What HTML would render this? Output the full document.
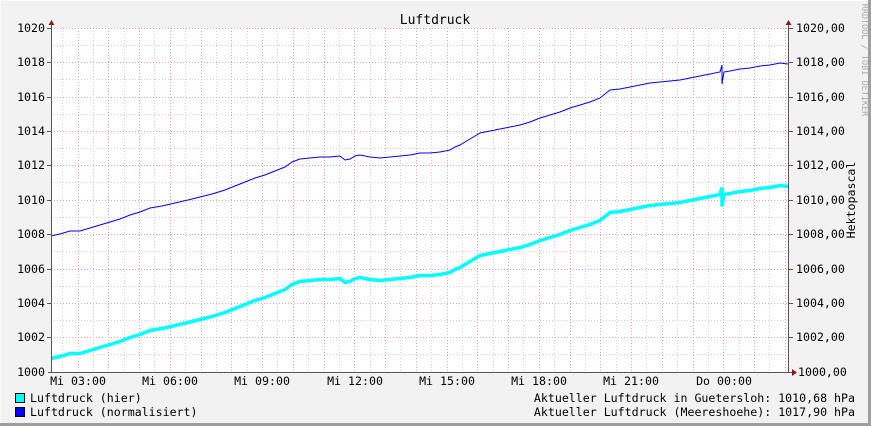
<!DOCTYPE html>
<html><head><meta charset="utf-8"><style>
html,body{margin:0;padding:0;background:#f2f2f2}
svg{display:block}
text{font-family:"DejaVu Sans Mono","Liberation Mono",monospace;font-size:11.6px;fill:#000}
</style></head><body>
<svg width="871" height="426" viewBox="0 0 871 426" xmlns="http://www.w3.org/2000/svg">
<rect x="0" y="0" width="871" height="426" fill="#f2f2f2"/>
<line x1="0" y1="0.5" x2="871" y2="0.5" stroke="#fcfcfc"/>
<line x1="0.5" y1="0" x2="0.5" y2="426" stroke="#fcfcfc"/>
<line x1="0" y1="424.5" x2="871" y2="424.5" stroke="#9e9e9e" stroke-width="3"/>
<line x1="869.5" y1="0" x2="869.5" y2="426" stroke="#9e9e9e" stroke-width="3"/>
<rect x="51" y="28" width="738" height="344" fill="#fff"/>
<g id="grid" stroke-width="1" stroke-dasharray="1,2">
<g stroke="#d0d0d0">
<line x1="62.5" y1="28" x2="62.5" y2="372"/><line x1="93.5" y1="28" x2="93.5" y2="372"/><line x1="124.5" y1="28" x2="124.5" y2="372"/><line x1="154.5" y1="28" x2="154.5" y2="372"/><line x1="185.5" y1="28" x2="185.5" y2="372"/><line x1="216.5" y1="28" x2="216.5" y2="372"/><line x1="247.5" y1="28" x2="247.5" y2="372"/><line x1="277.5" y1="28" x2="277.5" y2="372"/><line x1="308.5" y1="28" x2="308.5" y2="372"/><line x1="339.5" y1="28" x2="339.5" y2="372"/><line x1="370.5" y1="28" x2="370.5" y2="372"/><line x1="400.5" y1="28" x2="400.5" y2="372"/><line x1="431.5" y1="28" x2="431.5" y2="372"/><line x1="462.5" y1="28" x2="462.5" y2="372"/><line x1="493.5" y1="28" x2="493.5" y2="372"/><line x1="523.5" y1="28" x2="523.5" y2="372"/><line x1="554.5" y1="28" x2="554.5" y2="372"/><line x1="585.5" y1="28" x2="585.5" y2="372"/><line x1="616.5" y1="28" x2="616.5" y2="372"/><line x1="646.5" y1="28" x2="646.5" y2="372"/><line x1="677.5" y1="28" x2="677.5" y2="372"/><line x1="708.5" y1="28" x2="708.5" y2="372"/><line x1="739.5" y1="28" x2="739.5" y2="372"/><line x1="769.5" y1="28" x2="769.5" y2="372"/>
<line x1="51" y1="45.5" x2="789" y2="45.5"/><line x1="51" y1="79.5" x2="789" y2="79.5"/><line x1="51" y1="114.5" x2="789" y2="114.5"/><line x1="51" y1="148.5" x2="789" y2="148.5"/><line x1="51" y1="182.5" x2="789" y2="182.5"/><line x1="51" y1="217.5" x2="789" y2="217.5"/><line x1="51" y1="251.5" x2="789" y2="251.5"/><line x1="51" y1="286.5" x2="789" y2="286.5"/><line x1="51" y1="320.5" x2="789" y2="320.5"/><line x1="51" y1="354.5" x2="789" y2="354.5"/>
</g>
<g stroke="#f0a0a0">
<line x1="78.5" y1="28" x2="78.5" y2="372"/><line x1="108.5" y1="28" x2="108.5" y2="372"/><line x1="139.5" y1="28" x2="139.5" y2="372"/><line x1="170.5" y1="28" x2="170.5" y2="372"/><line x1="201.5" y1="28" x2="201.5" y2="372"/><line x1="231.5" y1="28" x2="231.5" y2="372"/><line x1="262.5" y1="28" x2="262.5" y2="372"/><line x1="293.5" y1="28" x2="293.5" y2="372"/><line x1="324.5" y1="28" x2="324.5" y2="372"/><line x1="354.5" y1="28" x2="354.5" y2="372"/><line x1="385.5" y1="28" x2="385.5" y2="372"/><line x1="416.5" y1="28" x2="416.5" y2="372"/><line x1="447.5" y1="28" x2="447.5" y2="372"/><line x1="477.5" y1="28" x2="477.5" y2="372"/><line x1="508.5" y1="28" x2="508.5" y2="372"/><line x1="539.5" y1="28" x2="539.5" y2="372"/><line x1="570.5" y1="28" x2="570.5" y2="372"/><line x1="600.5" y1="28" x2="600.5" y2="372"/><line x1="631.5" y1="28" x2="631.5" y2="372"/><line x1="662.5" y1="28" x2="662.5" y2="372"/><line x1="693.5" y1="28" x2="693.5" y2="372"/><line x1="723.5" y1="28" x2="723.5" y2="372"/><line x1="754.5" y1="28" x2="754.5" y2="372"/><line x1="785.5" y1="28" x2="785.5" y2="372"/>
<line x1="51" y1="28.5" x2="789" y2="28.5"/><line x1="51" y1="62.5" x2="789" y2="62.5"/><line x1="51" y1="97.5" x2="789" y2="97.5"/><line x1="51" y1="131.5" x2="789" y2="131.5"/><line x1="51" y1="165.5" x2="789" y2="165.5"/><line x1="51" y1="200.5" x2="789" y2="200.5"/><line x1="51" y1="234.5" x2="789" y2="234.5"/><line x1="51" y1="269.5" x2="789" y2="269.5"/><line x1="51" y1="303.5" x2="789" y2="303.5"/><line x1="51" y1="337.5" x2="789" y2="337.5"/>
</g>
</g>
<g id="data" fill="none" stroke-linejoin="miter">
<polyline stroke="#0000ff" stroke-width="1" points="51,236 60,234 70,231 80,231 90,228 100,225 110,222 120,219 130,215 140,212 150,208 162,206 175,203 188,200 200,197 212,194 225,190 235,186 245,182 255,178 265,175 275,171 285,167 292,162 300,159 310,158 320,157 330,157 340,156 345,160 350,159 355,156 360,155 370,157 380,158 390,157 400,156 410,155 420,153 430,153 440,152 450,150 455,147 460,145 470,139 480,133 490,131 500,129 510,127 520,125 530,122 540,118 550,115 560,112 570,108 580,105 590,102 600,98 605,94 610,90 620,89 630,87 640,85 650,83 660,82 670,81 680,80 690,78 700,76 710,74 720,72 722,65 722,84 724,72 730,71 740,69 750,68 760,66 770,65 780,63 788,64"/>
<polyline stroke="#00ffff" stroke-width="3.5" transform="translate(0,122.5)" points="51,236 60,234 70,231 80,231 90,228 100,225 110,222 120,219 130,215 140,212 150,208 162,206 175,203 188,200 200,197 212,194 225,190 235,186 245,182 255,178 265,175 275,171 285,167 292,162 300,159 310,158 320,157 330,157 340,156 345,160 350,159 355,156 360,155 370,157 380,158 390,157 400,156 410,155 420,153 430,153 440,152 450,150 455,147 460,145 470,139 480,133 490,131 500,129 510,127 520,125 530,122 540,118 550,115 560,112 570,108 580,105 590,102 600,98 605,94 610,90 620,89 630,87 640,85 650,83 660,82 670,81 680,80 690,78 700,76 710,74 720,72 722,65 722,84 724,72 730,71 740,69 750,68 760,66 770,65 780,63 788,64"/>
</g>
<g stroke="#555">
<line x1="51.5" y1="24" x2="51.5" y2="373"/>
<line x1="48" y1="372.5" x2="792" y2="372.5"/>
<line x1="788.5" y1="24" x2="788.5" y2="373"/>
</g>
<g stroke="#555">
<line x1="47" y1="28.5" x2="51" y2="28.5"/><line x1="47" y1="62.5" x2="51" y2="62.5"/><line x1="47" y1="97.5" x2="51" y2="97.5"/><line x1="47" y1="131.5" x2="51" y2="131.5"/><line x1="47" y1="165.5" x2="51" y2="165.5"/><line x1="47" y1="200.5" x2="51" y2="200.5"/><line x1="47" y1="234.5" x2="51" y2="234.5"/><line x1="47" y1="269.5" x2="51" y2="269.5"/><line x1="47" y1="303.5" x2="51" y2="303.5"/><line x1="47" y1="337.5" x2="51" y2="337.5"/>
<line x1="789" y1="28.5" x2="793" y2="28.5"/><line x1="789" y1="62.5" x2="793" y2="62.5"/><line x1="789" y1="97.5" x2="793" y2="97.5"/><line x1="789" y1="131.5" x2="793" y2="131.5"/><line x1="789" y1="165.5" x2="793" y2="165.5"/><line x1="789" y1="200.5" x2="793" y2="200.5"/><line x1="789" y1="234.5" x2="793" y2="234.5"/><line x1="789" y1="269.5" x2="793" y2="269.5"/><line x1="789" y1="303.5" x2="793" y2="303.5"/><line x1="789" y1="337.5" x2="793" y2="337.5"/>
</g>
<polygon points="48.5,25 51.5,20 54.5,25" fill="#8b1a1a"/>
<polygon points="785.5,25 788.5,20 791.5,25" fill="#8b1a1a"/>
<polygon points="792,369 797,372.5 792,376" fill="#8b1a1a"/>
<text x="435" y="24" text-anchor="middle" style="font-size:13px">Luftdruck</text>
<g text-anchor="end">
<text x="45" y="32">1020</text><text x="45" y="66">1018</text><text x="45" y="101">1016</text><text x="45" y="135">1014</text><text x="45" y="169">1012</text><text x="45" y="204">1010</text><text x="45" y="238">1008</text><text x="45" y="273">1006</text><text x="45" y="307">1004</text><text x="45" y="341">1002</text><text x="45" y="376">1000</text>
</g>
<g>
<text x="796" y="32">1020,00</text><text x="796" y="66">1018,00</text><text x="796" y="101">1016,00</text><text x="796" y="135">1014,00</text><text x="796" y="169">1012,00</text><text x="796" y="204">1010,00</text><text x="796" y="238">1008,00</text><text x="796" y="273">1006,00</text><text x="796" y="307">1004,00</text><text x="796" y="341">1002,00</text><text x="798" y="376">1000,00</text>
</g>
<g text-anchor="middle">
<text x="78" y="385">Mi 03:00</text><text x="170" y="385">Mi 06:00</text><text x="262" y="385">Mi 09:00</text><text x="355" y="385">Mi 12:00</text><text x="447" y="385">Mi 15:00</text><text x="539" y="385">Mi 18:00</text><text x="631" y="385">Mi 21:00</text><text x="724" y="385">Do 00:00</text>
</g>
<text transform="translate(855,200) rotate(-90)" text-anchor="middle">Hektopascal</text>
<text transform="translate(862,60) rotate(90)" text-anchor="middle" style="font-size:8.5px;fill:#aaa">RRDTOOL / TOBI OETIKER</text>
<rect x="15.5" y="393.5" width="9" height="9" fill="#00ffff" stroke="#000"/>
<rect x="15.5" y="407.5" width="9" height="9" fill="#0000ff" stroke="#000"/>
<text x="30" y="402">Luftdruck (hier)</text>
<text x="30" y="416">Luftdruck (normalisiert)</text>
<text x="855" y="402" text-anchor="end">Aktueller Luftdruck in Guetersloh: 1010,68 hPa</text>
<text x="855" y="416" text-anchor="end">Aktueller Luftdruck (Meereshoehe): 1017,90 hPa</text>
</svg>
</body></html>
